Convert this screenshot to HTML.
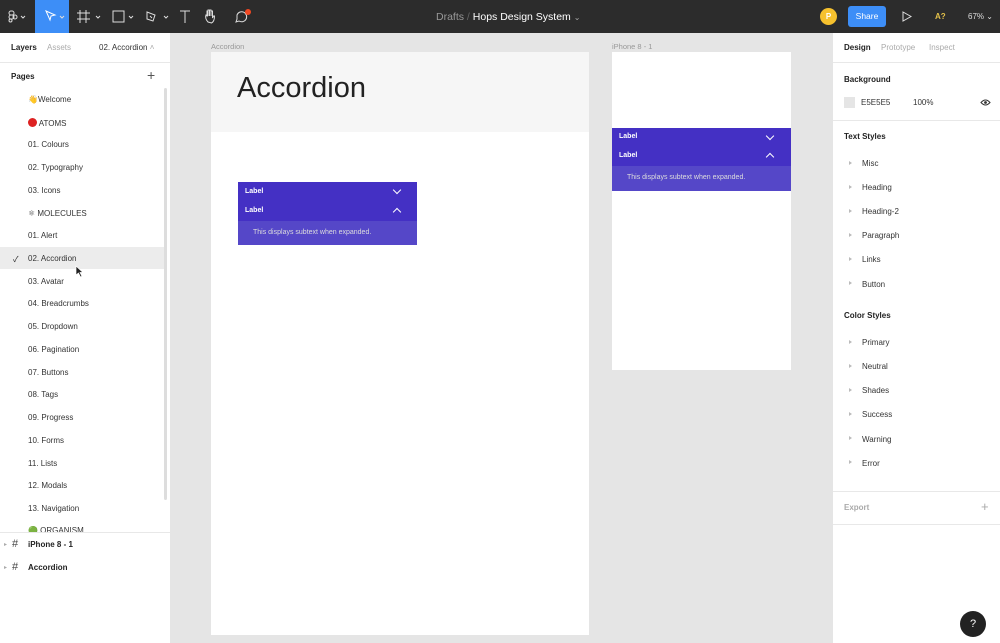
<!DOCTYPE html>
<html><head><meta charset="utf-8"><style>
*{margin:0;padding:0;box-sizing:border-box}
body{width:1000px;height:643px;overflow:hidden;position:relative;font-family:"Liberation Sans","Noto Sans CJK SC",sans-serif;background:#e5e5e5;font-size:8px;color:#222}
.a{position:absolute}
.tb{left:0;top:0;width:1000px;height:33px;background:#2c2c2c}
.lp{left:0;top:33px;width:170px;height:610px;background:#fff}
.rp{left:832px;top:33px;width:168px;height:610px;background:#fff;border-left:1px solid #e5e5e5}
.pg{left:28px;font-size:8px;color:#333}
.hr{height:1px;background:#e8e8e8}
.ri{left:862px;font-size:8px;color:#333}
.tri{left:849px;width:0;height:0;border-left:3px solid #bbb;border-top:2.5px solid transparent;border-bottom:2.5px solid transparent}
.h{font-weight:bold;font-size:8px;color:#222}
.acc{background:#4430c4;color:#fff;font-weight:bold;font-size:7px}
.chev{width:6px;height:6px;border-right:1px solid #fff;border-bottom:1px solid #fff}
</style></head><body>
<div class="a tb"></div>
<div class="a" style="left:35px;top:0;width:34px;height:33px;background:#3d8ef7"></div>
<svg class="a" style="left:0;top:0" width="260" height="33">
<g stroke="#ddd" fill="none" stroke-width="1">
<rect x="9" y="11" width="5" height="4" rx="2"/><rect x="9" y="15" width="5" height="4" rx="2"/><rect x="9" y="19" width="3" height="3" rx="1.5"/><circle cx="15" cy="17" r="2"/>
<path d="M21 16l2 2 2-2M60 16l2 2 2-2M96 16l2 2 2-2M129 16l2 2 2-2M164 16l2 2 2-2"/>
<path d="M46 11l9 4-4 1-1 4z" stroke="#fff"/>
<path d="M80 10v13M86 10v13M77 13h13M77 19h13"/>
<rect x="113" y="11" width="11" height="11"/>
<path d="M147 12l8 3-2 6-6-2z M150 16l2 2"/>
<path d="M180 11h10M185 11v12"/>
<path d="M208 22c-2-2-3-5-2-7l1 1v-5h1v5-6h1.5v6-6h1.5v6-5h1.5v7l1-2h1c0 3-1 6-3 7z"/>
<path d="M237 15a5 5 0 1 1 2 6l-3 1 1-3z"/>
</g><circle cx="248" cy="12" r="3" fill="#f24822"/></svg>
<div class="a" style="left:436px;top:11px;font-size:10.5px;color:#999">Drafts <span style="color:#666">/</span> <span style="color:#fff">Hops Design System</span> <span style="color:#aaa;font-size:8px">⌄</span></div>
<div class="a" style="left:820px;top:8px;width:17px;height:17px;border-radius:50%;background:#f6c12e;color:#fff;font-size:8px;text-align:center;line-height:17px;font-weight:bold">P</div>
<div class="a" style="left:848px;top:6px;width:38px;height:21px;border-radius:3px;background:#3d8ef7;color:#fff;font-size:8.5px;text-align:center;line-height:21px">Share</div>
<svg class="a" style="left:902px;top:11px" width="10" height="11"><path d="M1 1l8 4.5-8 4.5z" fill="none" stroke="#ddd"/></svg>
<div class="a" style="left:935px;top:12px;color:#e5c24a;font-size:8px;font-weight:bold">A?</div>
<div class="a" style="left:968px;top:12px;color:#ddd;font-size:8px">67% ⌄</div>

<div class="a lp"></div>
<div class="a" style="left:11px;top:43px;font-weight:bold">Layers</div>
<div class="a" style="left:47px;top:43px;color:#aaa">Assets</div>
<div class="a" style="left:99px;top:43px;color:#333">02. Accordion <span style="color:#aaa">˄</span></div>
<div class="a hr" style="left:0;top:62px;width:170px"></div>
<div class="a" style="left:11px;top:72px;font-weight:bold">Pages</div>
<div class="a" style="left:147px;top:67px;font-size:14px;color:#555">+</div>
<div class="a" style="left:164px;top:88px;width:3px;height:412px;background:#ddd;border-radius:2px"></div>
<div class="a" style="left:0;top:247px;width:164px;height:22px;background:#ececec"></div>
<div class="a" style="left:13px;top:254px;font-size:8px">✓</div>
<div class="a pg" style="top:95px">👋Welcome</div>
<div class="a pg" style="top:118px"><span style="display:inline-block;width:9px;height:9px;border-radius:50%;background:#d22;vertical-align:-1px"></span> ATOMS</div>
<div class="a pg" style="top:140px">01. Colours</div>
<div class="a pg" style="top:163px">02. Typography</div>
<div class="a pg" style="top:186px">03. Icons</div>
<div class="a pg" style="top:209px">⚛ MOLECULES</div>
<div class="a pg" style="top:231px">01. Alert</div>
<div class="a pg" style="top:254px">02. Accordion</div>
<div class="a pg" style="top:277px">03. Avatar</div>
<div class="a pg" style="top:299px">04. Breadcrumbs</div>
<div class="a pg" style="top:322px">05. Dropdown</div>
<div class="a pg" style="top:345px">06. Pagination</div>
<div class="a pg" style="top:368px">07. Buttons</div>
<div class="a pg" style="top:390px">08. Tags</div>
<div class="a pg" style="top:413px">09. Progress</div>
<div class="a pg" style="top:436px">10. Forms</div>
<div class="a pg" style="top:459px">11. Lists</div>
<div class="a pg" style="top:481px">12. Modals</div>
<div class="a pg" style="top:504px">13. Navigation</div>
<div class="a pg" style="top:526px;height:6px;overflow:hidden">🟢 ORGANISM</div>
<div class="a hr" style="left:0;top:532px;width:170px"></div>
<div class="a" style="left:4px;top:541px;font-size:6px;color:#aaa">▸</div>
<div class="a" style="left:12px;top:538px;font-size:11px;color:#444">#</div>
<div class="a" style="left:28px;top:540px;font-weight:bold">iPhone 8 - 1</div>
<div class="a" style="left:4px;top:564px;font-size:6px;color:#aaa">▸</div>
<div class="a" style="left:12px;top:561px;font-size:11px;color:#444">#</div>
<div class="a" style="left:28px;top:563px;font-weight:bold">Accordion</div>
<svg class="a" style="left:75px;top:265px" width="10" height="13"><path d="M1 1v9l2.5-2 2 4 1.5-.7-2-3.8h3z" fill="#222" stroke="#fff" stroke-width=".7"/></svg>

<div class="a" style="left:211px;top:42px;font-size:7.5px;color:#999">Accordion</div>
<div class="a" style="left:211px;top:52px;width:378px;height:583px;background:#fff"></div>
<div class="a" style="left:211px;top:52px;width:378px;height:80px;background:#f6f6f6"></div>
<div class="a" style="left:237px;top:72px;font-size:29px;font-weight:300;color:#222">Accordion</div>
<div class="a acc" style="left:238px;top:182px;width:179px;height:39px"></div>
<div class="a" style="left:238px;top:221px;width:179px;height:24px;background:#5547c8"></div>
<div class="a" style="left:245px;top:188px;color:#fff;font-weight:bold;font-size:7px">Label</div>
<div class="a" style="left:245px;top:207px;color:#fff;font-weight:bold;font-size:7px">Label</div>
<div class="a chev" style="left:394px;top:187px;transform:rotate(45deg)"></div>
<div class="a chev" style="left:394px;top:209px;transform:rotate(225deg)"></div>
<div class="a" style="left:253px;top:229px;color:#ddd;font-size:7px">This displays subtext when expanded.</div>

<div class="a" style="left:612px;top:42px;font-size:7.5px;color:#999">iPhone 8 - 1</div>
<div class="a" style="left:612px;top:52px;width:179px;height:318px;background:#fff"></div>
<div class="a acc" style="left:612px;top:128px;width:179px;height:38px"></div>
<div class="a" style="left:612px;top:166px;width:179px;height:25px;background:#5547c8"></div>
<div class="a" style="left:619px;top:133px;color:#fff;font-weight:bold;font-size:7px">Label</div>
<div class="a" style="left:619px;top:152px;color:#fff;font-weight:bold;font-size:7px">Label</div>
<div class="a chev" style="left:767px;top:133px;transform:rotate(45deg)"></div>
<div class="a chev" style="left:767px;top:154px;transform:rotate(225deg)"></div>
<div class="a" style="left:627px;top:174px;color:#ddd;font-size:7px">This displays subtext when expanded.</div>

<div class="a rp"></div>
<div class="a h" style="left:844px;top:43px">Design</div>
<div class="a" style="left:881px;top:43px;color:#aaa">Prototype</div>
<div class="a" style="left:929px;top:43px;color:#aaa">Inspect</div>
<div class="a hr" style="left:833px;top:62px;width:167px"></div>
<div class="a h" style="left:844px;top:75px">Background</div>
<div class="a" style="left:844px;top:97px;width:11px;height:11px;background:#e5e5e5"></div>
<div class="a" style="left:861px;top:98px;color:#333">E5E5E5</div>
<div class="a" style="left:913px;top:98px;color:#333">100%</div>
<svg class="a" style="left:980px;top:99px" width="11" height="7"><path d="M1 3.5q4.5-5 9 0q-4.5 5-9 0z" fill="none" stroke="#333"/><circle cx="5.5" cy="3.5" r="1.4" fill="#333"/></svg>
<div class="a hr" style="left:833px;top:120px;width:167px"></div>
<div class="a h" style="left:844px;top:132px">Text Styles</div>
<div class="a tri" style="top:161px"></div><div class="a ri" style="top:159px">Misc</div>
<div class="a tri" style="top:185px"></div><div class="a ri" style="top:183px">Heading</div>
<div class="a tri" style="top:209px"></div><div class="a ri" style="top:207px">Heading-2</div>
<div class="a tri" style="top:233px"></div><div class="a ri" style="top:231px">Paragraph</div>
<div class="a tri" style="top:257px"></div><div class="a ri" style="top:255px">Links</div>
<div class="a tri" style="top:281px"></div><div class="a ri" style="top:280px">Button</div>
<div class="a h" style="left:844px;top:311px">Color Styles</div>
<div class="a tri" style="top:340px"></div><div class="a ri" style="top:338px">Primary</div>
<div class="a tri" style="top:364px"></div><div class="a ri" style="top:362px">Neutral</div>
<div class="a tri" style="top:388px"></div><div class="a ri" style="top:386px">Shades</div>
<div class="a tri" style="top:412px"></div><div class="a ri" style="top:410px">Success</div>
<div class="a tri" style="top:436px"></div><div class="a ri" style="top:435px">Warning</div>
<div class="a tri" style="top:460px"></div><div class="a ri" style="top:459px">Error</div>
<div class="a hr" style="left:833px;top:491px;width:167px"></div>
<div class="a" style="left:844px;top:503px;font-weight:bold;color:#aaa">Export</div>
<div class="a" style="left:981px;top:499px;font-size:13px;color:#aaa">+</div>
<div class="a hr" style="left:833px;top:524px;width:167px"></div>
<div class="a" style="left:960px;top:611px;width:26px;height:26px;border-radius:50%;background:#222;color:#fff;font-size:11px;text-align:center;line-height:26px">?</div>
</body></html>
